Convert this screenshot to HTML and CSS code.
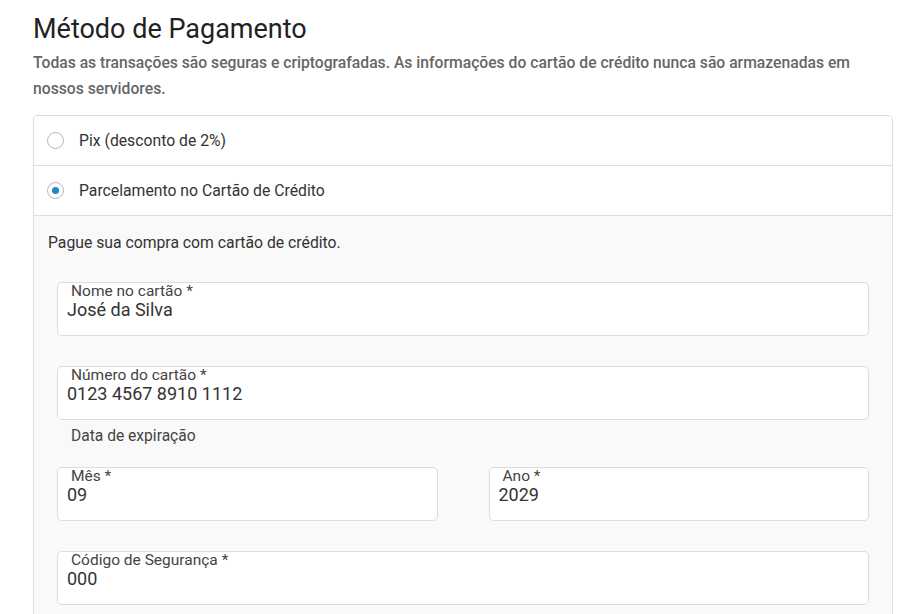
FILE: index.html
```html
<!DOCTYPE html>
<html lang="pt-BR">
<head>
<meta charset="utf-8">
<title>Método de Pagamento</title>
<link rel="stylesheet" href="styles.css">
</head>
<body>
<main class="page">
  <h1 class="title">Método de Pagamento</h1>
  <p class="subtitle">Todas as transações são seguras e criptografadas. As informações do cartão de crédito nunca são armazenadas em nossos servidores.</p>

  <section class="card">
    <div class="option">
      <span class="radio"></span>
      <span class="option-label">Pix (desconto de 2%)</span>
    </div>
    <div class="option">
      <span class="radio radio-checked"></span>
      <span class="option-label">Parcelamento no Cartão de Crédito</span>
    </div>
    <div class="panel">
      <p class="intro">Pague sua compra com cartão de crédito.</p>
      <div class="form">
        <div class="field">
          <span class="field-label">Nome no cartão *</span>
          <span class="field-value">José da Silva</span>
        </div>
        <div class="field field-gap">
          <span class="field-label">Número do cartão *</span>
          <span class="field-value">0123 4567 8910 1112</span>
        </div>
        <div class="group-label">Data de expiração</div>
        <div class="row">
          <div class="field">
            <span class="field-label">Mês *</span>
            <span class="field-value">09</span>
          </div>
          <div class="field">
            <span class="field-label">Ano *</span>
            <span class="field-value">2029</span>
          </div>
        </div>
        <div class="field field-gap2">
          <span class="field-label">Código de Segurança *</span>
          <span class="field-value">000</span>
        </div>
      </div>
    </div>
  </section>
</main>
</body>
</html>
```

FILE: styles.css
```css
* { box-sizing: border-box; }

html, body {
  margin: 0;
  padding: 0;
  background: #ffffff;
}

body {
  font-family: Roboto, "Liberation Sans", Arial, sans-serif;
  color: #333333;
}

.page {
  width: 860px;
  margin-left: 33px;
  padding-top: 12px;
}

.title {
  margin: 0;
  font-size: 27px;
  font-weight: 400;
  line-height: 34px;
  color: #222222;
}

.subtitle {
  margin: 4px 0 0 0;
  font-size: 15.7px;
  font-weight: 500;
  line-height: 26px;
  color: #666666;
}

.card {
  margin-top: 13px;
  border: 1px solid #dddddd;
  border-radius: 4px 4px 0 0;
  overflow: hidden;
}

.option {
  display: flex;
  align-items: center;
  height: 50px;
  padding-left: 13px;
  gap: 15px;
  border-bottom: 1px solid #dddddd;
  background: #ffffff;
}

.radio {
  width: 17px;
  height: 17px;
  border: 1px solid #b5b5b5;
  border-radius: 50%;
  background: #ffffff;
  display: flex;
  align-items: center;
  justify-content: center;
  flex: none;
}

.radio-checked::after {
  content: "";
  width: 7px;
  height: 7px;
  border-radius: 50%;
  background: #1e88c8;
}

.option-label {
  font-size: 15.75px;
  color: #333333;
}

.panel {
  background: #f9f9f9;
  padding: 18px 23px 20px 23px;
}

.intro {
  margin: 0 0 0 -9px;
  font-size: 15.75px;
  line-height: 18px;
  color: #333333;
}

.form {
  padding-top: 30px;
}

.field {
  height: 54px;
  background: #ffffff;
  border: 1px solid #dcdcdc;
  border-radius: 5px;
  padding: 0 9px;
  display: flex;
  flex-direction: column;
}

.field-gap { margin-top: 30px; }
.field-gap2 { margin-top: 30px; }

.field-label {
  font-size: 15.5px;
  line-height: 17px;
  color: #444444;
  padding-left: 4px;
}

.field-value {
  font-size: 18px;
  line-height: 19px;
  color: #333333;
}

.group-label {
  margin: 7px 0 0 14px;
  font-size: 15.6px;
  line-height: 18px;
  color: #444444;
}

.row {
  margin-top: 22px;
  display: grid;
  grid-template-columns: 1fr 1fr;
  column-gap: 51px;
}
```
